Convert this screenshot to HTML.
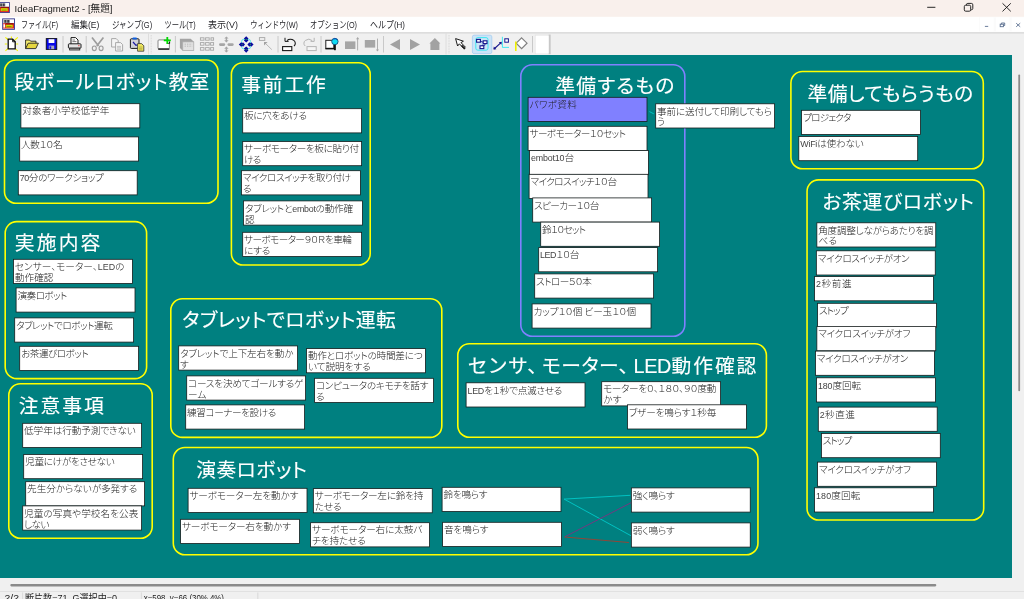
<!DOCTYPE html>
<html lang="ja">
<head>
<meta charset="utf-8">
<title>IdeaFragment2 - [無題]</title>
<style>
html,body{margin:0;padding:0;}
body{width:1024px;height:599px;overflow:hidden;background:#f0f0f0;position:relative;font-family:"Liberation Sans","Noto Sans CJK JP",sans-serif;}
#canvas{position:absolute;left:0;top:55px;display:block;will-change:transform;}
#chrome,#bars{will-change:transform;}
.gt{font-family:"Liberation Sans","Noto Sans CJK JP",sans-serif;font-size:19.8px;fill:#ffffff;font-weight:400;font-feature-settings:'palt';stroke:#ffffff;stroke-width:0.14px;}
.ct{font-family:"Liberation Sans","Noto Sans CJK JP",sans-serif;font-size:9.65px;fill:#1c1c1c;font-weight:300;font-feature-settings:'palt';}
#titlebar{position:absolute;left:0;top:0;width:1024px;height:17px;background:#f9f0ec;}
#menubar{position:absolute;left:0;top:17px;width:1024px;height:15px;background:#ffffff;}
#toolbar{position:absolute;left:0;top:32px;width:1024px;height:23px;background:#f0f0f0;}
#vscroll{position:absolute;left:1012px;top:55px;width:12px;height:523px;background:#f0f0f0;}
#hscroll{position:absolute;left:0;top:578px;width:1024px;height:13px;background:#f0f0f0;}
#status{position:absolute;left:0;top:591px;width:1024px;height:8px;background:#f0f0f0;overflow:hidden;}
svg{display:block;}
svg text{white-space:pre;}
.lat{fill:#444;font-size:8.9px;}
</style>
</head>
<body>
<div id="titlebar"></div>
<div id="menubar"></div>
<div id="toolbar"></div>
<svg id="chrome" width="1024" height="55" viewBox="0 0 1024 55" style="position:absolute;left:0;top:0">
<defs>
<style>
.tt{font-family:"Liberation Sans","Noto Sans CJK JP",sans-serif;font-size:9.8px;fill:#1a1a1a;}
.mt{font-family:"Liberation Sans","Noto Sans CJK JP",sans-serif;font-size:9.6px;fill:#1f1f24;}
</style>
</defs>
<!-- title bar -->
<rect x="0" y="0" width="1024" height="16.8" fill="#f9f0ec"/>
<g id="appicon">
<rect x="-3" y="2.1" width="12.8" height="10.9" fill="#34348c"/>
<rect x="-3" y="2.9" width="12" height="9.2" fill="#ffffff"/>
<rect x="-1" y="3.3" width="6.3" height="3.2" fill="#8c8c90"/>
<rect x="0.4" y="3.6" width="1.4" height="2.6" fill="#3c3c44"/><rect x="3" y="3.6" width="1.6" height="2.6" fill="#3c3c44"/>
<rect x="-3" y="6.9" width="12" height="5.2" fill="#e02424"/>
<rect x="0.6" y="6.8" width="8.4" height="1.3" fill="#8c1414"/>
<rect x="0.8" y="8.2" width="6.9" height="2.9" fill="#d4dc00"/>
<rect x="1.6" y="9.6" width="5" height="1" fill="#8c9400"/>
</g>
<text class="tt" x="14.6" y="11.5" textLength="97.8" lengthAdjust="spacingAndGlyphs">IdeaFragment2 - [無題]</text>
<g stroke="#1c1c1c" stroke-width="0.95" fill="none">
<line x1="927.2" y1="7.3" x2="935.4" y2="7.3"/>
<rect x="964.3" y="5.2" width="6.4" height="6" rx="1.4"/>
<path d="M966.4 5.2 v-0.4 a1.4 1.4 0 0 1 1.4 -1.4 h3.6 a1.4 1.4 0 0 1 1.4 1.4 v3.6 a1.4 1.4 0 0 1 -1.4 1.4 h-0.5"/>
<path d="M1002.5 3.3 l8.3 8.1 M1010.8 3.3 l-8.3 8.1"/>
</g>
<!-- menu bar -->
<rect x="0" y="16.8" width="1024" height="15.2" fill="#ffffff"/>

<g id="docicon">
<rect x="2.2" y="18.4" width="12.7" height="11.4" fill="#34348c"/>
<rect x="3.1" y="19.3" width="10.9" height="9.5" fill="#ffffff"/>
<rect x="3.5" y="19.7" width="6.4" height="3.2" fill="#8c8c90"/>
<rect x="4.6" y="20" width="1.4" height="2.6" fill="#3c3c44"/><rect x="7.4" y="20" width="1.6" height="2.6" fill="#3c3c44"/>
<rect x="3.1" y="23.2" width="10.9" height="5.3" fill="#e02424"/>
<rect x="3.4" y="24.2" width="1.6" height="3.4" fill="#ffffff"/>
<rect x="5.4" y="23.1" width="8.2" height="1.4" fill="#8c1414"/>
<rect x="5.7" y="24.8" width="7" height="2.7" fill="#d4dc00"/>
<rect x="6.6" y="26" width="5" height="1" fill="#8c9400"/>
</g>
<text class="mt" x="20.9" y="28.4" textLength="37.2" lengthAdjust="spacingAndGlyphs">ファイル(F)</text>
<text class="mt" x="71" y="28.4" textLength="28.4" lengthAdjust="spacingAndGlyphs">編集(E)</text>
<text class="mt" x="112" y="28.4" textLength="40.2" lengthAdjust="spacingAndGlyphs">ジャンプ(G)</text>
<text class="mt" x="164.4" y="28.4" textLength="31.2" lengthAdjust="spacingAndGlyphs">ツール(T)</text>
<text class="mt" x="208" y="28.4" textLength="30" lengthAdjust="spacingAndGlyphs">表示(V)</text>
<text class="mt" x="250.2" y="28.4" textLength="47.8" lengthAdjust="spacingAndGlyphs">ウィンドウ(W)</text>
<text class="mt" x="310" y="28.4" textLength="47" lengthAdjust="spacingAndGlyphs">オプション(O)</text>
<text class="mt" x="370" y="28.4" textLength="35" lengthAdjust="spacingAndGlyphs">ヘルプ(H)</text>
<!-- MDI buttons -->
<g>
<rect x="979" y="17.4" width="45" height="14" fill="#fbfbfb"/>
<rect x="980" y="17.4" width="13.6" height="14" fill="#ffffff"/>
<rect x="995.8" y="17.4" width="13.7" height="14" fill="#ffffff"/>
<rect x="1011.6" y="17.4" width="12.4" height="14" fill="#ffffff"/>
<g stroke="#5b6f90" stroke-width="0.9" fill="none">
<line x1="984.9" y1="26.4" x2="988.2" y2="26.4"/>
<rect x="1000.2" y="24.2" width="3.2" height="2.5"/>
<path d="M1001.4 24.2 v-1.2 h3.3 v2.5 h-1.3"/>
<path d="M1016.2 23.2 l4 3.6 M1020.2 23.2 l-4 3.6"/>
</g>
</g>
<!-- toolbar -->
<rect x="0" y="32" width="1024" height="23" fill="#f0f0f0"/>
<rect x="0" y="32" width="1024" height="1.7" fill="#dddddd"/>
<g id="tb">
<!-- separators -->
<g stroke="#c4c4c4" stroke-width="0.9">
<line x1="63" y1="36" x2="63" y2="52.5"/>
<line x1="86.2" y1="36" x2="86.2" y2="52.5"/>
<line x1="148.5" y1="33.5" x2="148.5" y2="54.5" stroke="#dadada"/>
<line x1="175.4" y1="36" x2="175.4" y2="52.5"/>
<line x1="278" y1="36" x2="278" y2="52.5"/>
<line x1="321" y1="36" x2="321" y2="52.5"/>
<line x1="383.5" y1="36" x2="383.5" y2="52.5"/>
<line x1="446" y1="33.5" x2="446" y2="54.5" stroke="#dadada"/>
<line x1="532.5" y1="36" x2="532.5" y2="52.5"/>
<line x1="151.2" y1="35" x2="151.2" y2="54" stroke="#cfcfcf" stroke-dasharray="0.8 0.8"/>
<line x1="449" y1="35" x2="449" y2="54" stroke="#cfcfcf" stroke-dasharray="0.8 0.8"/>
</g>
<!-- 1 new -->
<g>
<path d="M5.4 37.4 l3 2.6 M17.8 37.4 l-3 2.6 M5.4 50.8 l3 -2.6 M17.8 50.8 l-3 -2.6 M11.4 36.4 v2 M4.8 44 h2.4 M18.2 44 h-2" stroke="#f4f400" stroke-width="1.1" fill="none"/>
<path d="M8.2 39.2 h4.4 l2.6 2.6 v7 h-7 z" fill="#ffffff" stroke="#0c0c0c" stroke-width="1.3"/>
<path d="M12.6 39.2 v2.6 h2.6" fill="none" stroke="#0c0c0c" stroke-width="0.9"/>
</g>
<!-- 2 open -->
<g>
<path d="M25.6 48.6 v-8.6 h4 l1 1.2 h5.4 v2" fill="#f4ec70" stroke="#222" stroke-width="0.9"/>
<path d="M25.6 48.6 l2.6 -5.4 h10.2 l-2.6 5.4 z" fill="#e6d640" stroke="#222" stroke-width="0.9"/>
</g>
<!-- 3 save -->
<g>
<rect x="46.3" y="38.6" width="10.4" height="10.8" fill="#0808e8" stroke="#101020" stroke-width="1"/>
<rect x="48.6" y="39.2" width="5.8" height="3.8" fill="#ffffff"/>
<rect x="48.8" y="45.6" width="5.4" height="3.6" fill="#a8a8c0"/>
<rect x="49.6" y="46.4" width="1.6" height="2.4" fill="#0808e8"/>
</g>
<!-- 4 print -->
<g>
<path d="M71 44 v-6.4 h4.6 l2.4 2.4 v4" fill="#ffffff" stroke="#1c1c1c" stroke-width="1"/>
<path d="M72.4 40 h2.6 M72.4 41.6 h4" stroke="#444" stroke-width="0.7"/>
<rect x="68.4" y="43.8" width="12.6" height="4.4" rx="0.8" fill="#e4e4e4" stroke="#1c1c1c" stroke-width="1"/>
<rect x="69.6" y="48.2" width="10.2" height="1.8" fill="#bdbdbd" stroke="#1c1c1c" stroke-width="0.8"/>
<rect x="78.2" y="45.2" width="1.3" height="1" fill="#e03030"/>
</g>
<!-- 5 cut gray -->
<g stroke="#9c9c9c" fill="none">
<path d="M92 37.4 l6.6 8.6 M103.4 37.4 l-6.6 8.6" stroke-width="1.7"/>
<ellipse cx="94.3" cy="48.3" rx="2" ry="2.3" stroke-width="1.1"/>
<ellipse cx="101.1" cy="48.3" rx="2" ry="2.3" stroke-width="1.1"/>
</g>
<!-- 6 copy gray -->
<g stroke="#a0a0a0" stroke-width="0.9" fill="#f4f4f4">
<path d="M111.6 38.6 h4.6 l2 2 v6.4 h-6.6 z"/>
<path d="M115.6 42.6 h5 l2 2 v6.4 h-7 z"/>
<path d="M117 46.4 h4 M117 47.8 h4 M117 49.2 h4" stroke-width="0.6"/>
</g>
<!-- 7 paste -->
<g>
<rect x="130.4" y="38.8" width="8.6" height="9.6" rx="0.8" fill="#d0d0d8" stroke="#181818" stroke-width="1"/>
<rect x="132.4" y="37.4" width="4.6" height="2.2" rx="1" fill="#1060e0"/>
<path d="M133 42 l3 3.4 l1.6 -0.6" fill="none" stroke="#1818a0" stroke-width="1.2"/>
<path d="M137.6 43.6 h4 l2.2 2.2 v5.4 h-6.2 z" fill="#f0e860" stroke="#333" stroke-width="0.8"/>
<path d="M139 47 h3.4 M139 48.4 h3.4 M139 49.8 h3.4" stroke="#8a8430" stroke-width="0.5"/>
</g>
<!-- 8 new card -->
<g>
<rect x="158" y="39.9" width="11.4" height="9" rx="1" fill="#ffffff" stroke="#7c7c7c" stroke-width="0.9"/>
<path d="M158.2 49.1 h11.2" stroke="#101010" stroke-width="1.3"/>
<path d="M168.2 43.4 h1.4 v-1.6" stroke="#101010" stroke-width="1" fill="none"/>
<path d="M167.3 36.9 v7 M163.8 40.4 h7" stroke="#00d800" stroke-width="1.8" fill="none"/>
</g>
<!-- 9 gray stack -->
<g>
<path d="M179.9 38.8 h10.8 l3.2 2.9 v9 h-11.2 l-2.8 -2.6 z" fill="#a4a4a4"/>
<rect x="182.8" y="41.9" width="11" height="8.7" fill="#e2e2e2" stroke="#b0b0b0" stroke-width="0.7"/>
<path d="M184.6 44.2 h7.6 M184.6 46.2 h7.6" stroke="#b4b4b4" stroke-width="0.9" stroke-dasharray="1.3 1.1"/>
</g>
<!-- 10 gray grid -->
<g fill="#f0f0f0" stroke="#a6a6a6" stroke-width="0.9">
<rect x="200.4" y="37.8" width="3.6" height="2.4"/><rect x="205.6" y="37.8" width="3.6" height="2.4"/><rect x="211" y="37.8" width="2.6" height="2.4"/>
<rect x="200.4" y="42.6" width="3.6" height="2.6"/><rect x="205.6" y="42.6" width="3.6" height="2.6"/><rect x="210.6" y="42.6" width="3" height="2.6"/>
<rect x="200.4" y="47.6" width="3.6" height="2.6"/><rect x="205.6" y="47.6" width="3.6" height="2.6"/><rect x="210.6" y="47.6" width="3" height="2.6"/>
</g>
<!-- 11 gray 4 arrows -->
<g fill="#a6a6a6">
<rect x="219" y="43.2" width="6.2" height="2.7" rx="1.3"/>
<rect x="227.5" y="43.2" width="6.2" height="2.7" rx="1.3"/>
<path d="M226.4 36.4 l2.2 2.2 h-1.5 v1.6 h1.5 l-2.2 2.2 l-2.2 -2.2 h1.5 v-1.6 h-1.5 z"/>
<path d="M226.4 46.6 l2.2 2.2 h-1.5 v1.6 h1.5 l-2.2 2.2 l-2.2 -2.2 h1.5 v-1.6 h-1.5 z"/>
</g>
<!-- 12 blue 4 arrows -->
<g>
<rect x="241.6" y="39.3" width="9" height="9.6" rx="2.2" fill="none" stroke="#48e4e8" stroke-width="0.9"/>
<g fill="#0808a0">
<path d="M246.2 36.2 l2.3 2.4 l-1 0.9 l1 0.9 l-2.3 2 l-2.3 -2 l1 -0.9 l-1 -0.9 z"/>
<path d="M246.2 52.7 l2.3 -2.4 l-1 -0.9 l1 -0.9 l-2.3 -2 l-2.3 2 l1 0.9 l-1 0.9 z"/>
<path d="M238.8 44.5 l2.4 -2.3 l0.9 1 l0.9 -1 l2 2.3 l-2 2.3 l-0.9 -1 l-0.9 1 z"/>
<path d="M253.6 44.5 l-2.4 -2.3 l-0.9 1 l-0.9 -1 l-2 2.3 l2 2.3 l0.9 -1 l0.9 1 z"/>
</g>
<g fill="#30a040">
<rect x="245.5" y="38.9" width="1.4" height="0.9"/><rect x="245.5" y="49.3" width="1.4" height="0.9"/>
<rect x="241.6" y="44" width="0.9" height="1.1"/><rect x="249.9" y="44" width="0.9" height="1.1"/>
</g>
</g>
<!-- 13 gray arrow -->
<g>
<rect x="259.4" y="37.6" width="5.4" height="2.8" fill="none" stroke="#a6a6a6" stroke-width="0.9"/>
<path d="M264 42 h3.6 l-3.6 3.6 z" fill="#a2a2a2"/>
<path d="M265.4 43.4 l6.4 6.2" stroke="#a8a8a8" stroke-width="0.8"/>
</g>
<!-- 14 undo -->
<g fill="none" stroke="#181818" stroke-width="1.1">
<rect x="282.6" y="46.6" width="9.2" height="4" fill="#fff"/>
<path d="M294 46 a4.4 3.6 0 1 0 -7 -5.4"/>
<path d="M285 37.8 v3.6 h3.6" stroke-width="1"/>
</g>
<!-- 15 redo gray -->
<g fill="none" stroke="#b4b4b4" stroke-width="1">
<rect x="307" y="46.6" width="9.2" height="4" fill="#f6f6f6"/>
<path d="M305.2 46 a4.4 3.6 0 1 1 7 -5.4"/>
<path d="M314.2 37.8 v3.6 h-3.6"/>
</g>
<!-- 16 balloon -->
<g>
<rect x="325.8" y="40.3" width="8" height="8" fill="#ffffff" stroke="#202020" stroke-width="1"/>
<path d="M325.4 48.7 h9" stroke="#101010" stroke-width="1.4"/>
<path d="M334.9 44 v6.2" stroke="#101010" stroke-width="1.9"/>
<circle cx="334.9" cy="41.5" r="3.2" fill="#10dcf4" stroke="#103c70" stroke-width="0.8"/>
<path d="M333.4 39.2 a3 3 0 0 1 3.6 0.4" stroke="#1040c0" stroke-width="0.9" fill="none"/>
</g>
<!-- 17/18 gray squares with arrows -->
<g fill="#a6a6a6" stroke="none">
<rect x="345" y="41.4" width="10.4" height="7.6"/>
<rect x="357.2" y="38.4" width="0.9" height="12" />
<path d="M357.65 37 l1.6 2.2 h-3.2 z"/>
<rect x="364.8" y="40" width="10.4" height="7.6"/>
<rect x="377" y="38.6" width="0.9" height="12"/>
<path d="M377.45 51.6 l1.6 -2.2 h-3.2 z"/>
</g>
<!-- 19-21 -->
<g fill="#a2a2a2">
<path d="M390 44.5 l10 -5.4 v10.8 z"/>
<path d="M420 44.5 l-10 -5.4 v10.8 z"/>
<path d="M429.4 43.6 l5.5 -5.6 l5.5 5.6 h-1 v6.4 h-9 v-6.4 z"/>
</g>
<!-- 22 cursor -->
<g>
<path d="M455.6 38.6 l2 7.4 l1.8 -2.2 l4.4 4.8 l1.6 -1.4 l-4.4 -4.6 l2.4 -1.4 z" fill="#ffffff" stroke="#1a1a1a" stroke-width="1" stroke-linejoin="round"/>
<path d="M461.6 45.4 l3.4 3.6" stroke="#1a1a1a" stroke-width="1.6"/>
</g>
<!-- 23 selected -->
<g>
<rect x="472.4" y="35.2" width="19.4" height="18.4" rx="1.6" fill="#cce4f7" stroke="#a4cdf0" stroke-width="0.8"/>
<rect x="475.8" y="37.6" width="12.2" height="12.6" rx="2" fill="none" stroke="#30e8f0" stroke-width="0.9"/>
<g fill="#ffffff" stroke="#14148c" stroke-width="1.1">
<rect x="476.6" y="39.4" width="3.8" height="2.8"/>
<rect x="483.2" y="40.8" width="3.8" height="2.8"/>
<rect x="480" y="45.8" width="3.8" height="2.8"/>
</g>
<path d="M480.4 41.6 h2 v1 M485 43.6 v1.6 h-3 v0.6" fill="none" stroke="#14148c" stroke-width="0.8"/>
</g>
<!-- 24 arrow+box -->
<g>
<path d="M502.4 36.8 v10.6 h6.6" fill="none" stroke="#30e8f0" stroke-width="0.9"/>
<rect x="504.8" y="38.8" width="3.6" height="3.4" fill="#fff" stroke="#14148c" stroke-width="1"/>
<path d="M494 49 l7 -6.4" stroke="#14148c" stroke-width="1.1"/>
<path d="M493.4 49.6 l0.4 -3 l2.6 2.6 z M501.8 41.8 l-0.4 3 l-2.6 -2.6 z" fill="#14148c"/>
</g>
<!-- 25 diamond -->
<g>
<path d="M521.6 37.8 l5.4 5.4 l-5.4 5.4 l-5.4 -5.4 z" fill="#ffffff" stroke="#808080" stroke-width="1.2"/>
<path d="M515.8 41.6 v9.4" stroke="#f0f000" stroke-width="1.6"/>
</g>
<!-- 26 white box -->
<rect x="534.8" y="34.6" width="15.8" height="19.6" fill="#e4e4e4"/>
<rect x="548.6" y="34.6" width="2" height="19.6" fill="#c8c8c8"/>
<rect x="535.6" y="35.6" width="13.1" height="17.9" fill="#ffffff"/>
</g>
</svg>

<svg id="canvas" width="1012" height="523" viewBox="0 55 1012 523">
<rect x="0" y="55" width="1012" height="523" fill="#008080"/>
<g class="group" id="g1">
<rect x="4.50" y="60.00" width="213.50" height="143.20" rx="11.5" ry="11.5" fill="none" stroke="#ffff00" stroke-width="1.6"/>
<text class="gt" x="14.20" y="89.10" textLength="195.10" lengthAdjust="spacing">段ボールロボット教室</text>
</g>
<g class="group" id="g2">
<rect x="231.40" y="62.80" width="138.80" height="202.20" rx="11.5" ry="11.5" fill="none" stroke="#ffff00" stroke-width="1.6"/>
<text class="gt" x="241.20" y="91.90" textLength="84.60" lengthAdjust="spacing">事前工作</text>
</g>
<g class="group" id="g3">
<rect x="5.20" y="221.60" width="141.40" height="157.00" rx="11.5" ry="11.5" fill="none" stroke="#ffff00" stroke-width="1.6"/>
<text class="gt" x="14.80" y="250.10" textLength="85.60" lengthAdjust="spacing">実施内容</text>
</g>
<g class="group" id="g4">
<rect x="8.80" y="383.80" width="143.40" height="154.40" rx="11.5" ry="11.5" fill="none" stroke="#ffff00" stroke-width="1.6"/>
<text class="gt" x="18.80" y="412.50" textLength="85.00" lengthAdjust="spacing">注意事項</text>
</g>
<g class="group" id="g5">
<rect x="170.80" y="298.80" width="271.00" height="138.60" rx="11.5" ry="11.5" fill="none" stroke="#ffff00" stroke-width="1.6"/>
<text class="gt" x="182.20" y="327.10" textLength="213.60" lengthAdjust="spacing">タブレットでロボット運転</text>
</g>
<g class="group" id="g6">
<rect x="457.80" y="343.80" width="308.60" height="93.40" rx="11.5" ry="11.5" fill="none" stroke="#ffff00" stroke-width="1.6"/>
<text class="gt" x="467.80" y="372.50" textLength="59.40" lengthAdjust="spacing">センサ</text>
<text class="gt" x="527.40" y="372.50">、</text>
<text class="gt" x="542.00" y="372.50" textLength="76.60" lengthAdjust="spacing">モーター</text>
<text class="gt" x="618.80" y="372.50">、</text>
<text class="gt" x="633.60" y="372.50" textLength="37.60" lengthAdjust="spacing">LED</text>
<text class="gt" x="671.60" y="372.50" textLength="84.80" lengthAdjust="spacing">動作確認</text>
</g>
<g class="group" id="gp">
<rect x="520.80" y="64.80" width="164.00" height="271.40" rx="11.5" ry="11.5" fill="none" stroke="#8080ff" stroke-width="1.6"/>
<text class="gt" x="555.20" y="92.50" textLength="119.20" lengthAdjust="spacing">準備するもの</text>
</g>
<g class="group" id="g7">
<rect x="790.90" y="71.50" width="192.40" height="97.30" rx="11.5" ry="11.5" fill="none" stroke="#ffff00" stroke-width="1.6"/>
<text class="gt" x="807.60" y="100.50" textLength="165.50" lengthAdjust="spacing">準備してもらうもの</text>
</g>
<g class="group" id="g8">
<rect x="807.05" y="179.90" width="176.65" height="340.05" rx="11.5" ry="11.5" fill="none" stroke="#ffff00" stroke-width="1.6"/>
<text class="gt" x="822.45" y="209.00" textLength="151.60" lengthAdjust="spacing">お茶運びロボット</text>
</g>
<g class="group" id="g9">
<rect x="173.30" y="447.55" width="584.65" height="107.15" rx="11.5" ry="11.5" fill="none" stroke="#ffff00" stroke-width="1.6"/>
<text class="gt" x="196.20" y="476.50" textLength="110.85" lengthAdjust="spacing">演奏ロボット</text>
</g>
<line x1="564.1" y1="499.1" x2="630.4" y2="495.3" stroke="#00c8c8" stroke-width="0.9"/>
<line x1="564.1" y1="499.1" x2="631.1" y2="535.8" stroke="#00c8c8" stroke-width="0.9"/>
<line x1="564.6" y1="536.9" x2="631.7" y2="502.4" stroke="#803080" stroke-width="0.9"/>
<line x1="564.6" y1="537.0" x2="628.9" y2="542.5" stroke="#a04030" stroke-width="0.9"/>
<line x1="649.4" y1="111.6" x2="653.8" y2="113.8" stroke="#00c8c8" stroke-width="0.9"/>
<g class="card">
<rect x="20.90" y="103.70" width="118.9" height="24.2" fill="#ffffff" stroke="#141c1c" stroke-width="0.8"/>
<text class="ct" x="22.30" y="114.40" textLength="87.10" lengthAdjust="spacing">対象者小学校低学年</text>
</g>
<g class="card">
<rect x="19.70" y="136.90" width="118.9" height="24.2" fill="#ffffff" stroke="#141c1c" stroke-width="0.8"/>
<text class="ct" x="21.10" y="147.60" textLength="41.50" lengthAdjust="spacing">人数１０名</text>
</g>
<g class="card">
<rect x="18.30" y="170.70" width="118.9" height="24.2" fill="#ffffff" stroke="#141c1c" stroke-width="0.8"/>
<text class="ct" x="19.70" y="181.40" textLength="84.10" lengthAdjust="spacing"><tspan class="lat">70</tspan>分のワークショップ</text>
</g>
<g class="card">
<rect x="242.70" y="108.70" width="118.9" height="24.2" fill="#ffffff" stroke="#141c1c" stroke-width="0.8"/>
<text class="ct" x="244.10" y="119.40" textLength="62.90" lengthAdjust="spacing">板に穴をあける</text>
</g>
<g class="card">
<rect x="242.70" y="141.50" width="118.9" height="24.2" fill="#ffffff" stroke="#141c1c" stroke-width="0.8"/>
<text class="ct" x="244.10" y="152.20" textLength="114.90" lengthAdjust="spacing">サーボモーターを板に貼り付</text>
<text class="ct" x="244.10" y="163.10" textLength="17.30" lengthAdjust="spacing">ける</text>
</g>
<g class="card">
<rect x="241.50" y="170.70" width="118.9" height="24.2" fill="#ffffff" stroke="#141c1c" stroke-width="0.8"/>
<text class="ct" x="242.90" y="181.40" textLength="108.10" lengthAdjust="spacing">マイクロスイッチを取り付け</text>
<text class="ct" x="242.90" y="192.30" textLength="8.37" lengthAdjust="spacing">る</text>
</g>
<g class="card">
<rect x="243.50" y="200.90" width="118.9" height="24.2" fill="#ffffff" stroke="#141c1c" stroke-width="0.8"/>
<text class="ct" x="244.90" y="211.60" textLength="108.10" lengthAdjust="spacing">タブレットと<tspan class="lat">embot</tspan>の動作確</text>
<text class="ct" x="244.90" y="222.50" textLength="9.05" lengthAdjust="spacing">認</text>
</g>
<g class="card">
<rect x="242.70" y="232.30" width="118.9" height="24.2" fill="#ffffff" stroke="#141c1c" stroke-width="0.8"/>
<text class="ct" x="244.10" y="243.00" textLength="107.70" lengthAdjust="spacing">サーボモーター９０Ｒを車輪</text>
<text class="ct" x="244.10" y="253.90" textLength="26.30" lengthAdjust="spacing">にする</text>
</g>
<g class="card">
<rect x="13.50" y="259.30" width="118.9" height="24.2" fill="#ffffff" stroke="#141c1c" stroke-width="0.8"/>
<text class="ct" x="14.90" y="270.00" textLength="109.50" lengthAdjust="spacing">センサー、モーター、<tspan class="lat">LED</tspan>の</text>
<text class="ct" x="14.90" y="280.90" textLength="38.50" lengthAdjust="spacing">動作確認</text>
</g>
<g class="card">
<rect x="16.10" y="287.90" width="118.9" height="24.2" fill="#ffffff" stroke="#141c1c" stroke-width="0.8"/>
<text class="ct" x="17.50" y="298.60" textLength="49.90" lengthAdjust="spacing">演奏ロボット</text>
</g>
<g class="card">
<rect x="14.70" y="317.90" width="118.9" height="24.2" fill="#ffffff" stroke="#141c1c" stroke-width="0.8"/>
<text class="ct" x="16.10" y="328.60" textLength="96.70" lengthAdjust="spacing">タブレットでロボット運転</text>
</g>
<g class="card">
<rect x="19.70" y="346.30" width="118.9" height="24.2" fill="#ffffff" stroke="#141c1c" stroke-width="0.8"/>
<text class="ct" x="21.10" y="357.00" textLength="67.70" lengthAdjust="spacing">お茶運びロボット</text>
</g>
<g class="card">
<rect x="22.70" y="423.30" width="118.9" height="24.2" fill="#ffffff" stroke="#141c1c" stroke-width="0.8"/>
<text class="ct" x="24.10" y="434.00" textLength="111.70" lengthAdjust="spacing">低学年は行動予測できない</text>
</g>
<g class="card">
<rect x="23.70" y="454.50" width="118.9" height="24.2" fill="#ffffff" stroke="#141c1c" stroke-width="0.8"/>
<text class="ct" x="25.10" y="465.20" textLength="89.70" lengthAdjust="spacing">児童にけがをさせない</text>
</g>
<g class="card">
<rect x="25.70" y="481.70" width="118.9" height="24.2" fill="#ffffff" stroke="#141c1c" stroke-width="0.8"/>
<text class="ct" x="27.10" y="492.40" textLength="110.30" lengthAdjust="spacing">先生分からないが多発する</text>
</g>
<g class="card">
<rect x="22.70" y="505.90" width="118.9" height="24.2" fill="#ffffff" stroke="#141c1c" stroke-width="0.8"/>
<text class="ct" x="24.10" y="516.60" textLength="114.30" lengthAdjust="spacing">児童の写真や学校名を公表</text>
<text class="ct" x="24.10" y="527.50" textLength="25.30" lengthAdjust="spacing">しない</text>
</g>
<g class="card">
<rect x="178.70" y="345.90" width="118.9" height="24.2" fill="#ffffff" stroke="#141c1c" stroke-width="0.8"/>
<text class="ct" x="180.10" y="356.60" textLength="113.30" lengthAdjust="spacing">タブレットで上下左右を動か</text>
<text class="ct" x="180.10" y="367.50" textLength="8.37" lengthAdjust="spacing">す</text>
</g>
<g class="card">
<rect x="186.70" y="375.90" width="118.9" height="24.2" fill="#ffffff" stroke="#141c1c" stroke-width="0.8"/>
<text class="ct" x="188.10" y="386.60" textLength="115.30" lengthAdjust="spacing">コースを決めてゴールするゲ</text>
<text class="ct" x="188.10" y="397.50" textLength="18.30" lengthAdjust="spacing">ーム</text>
</g>
<g class="card">
<rect x="185.70" y="404.90" width="118.9" height="24.2" fill="#ffffff" stroke="#141c1c" stroke-width="0.8"/>
<text class="ct" x="187.10" y="415.60" textLength="89.30" lengthAdjust="spacing">練習コーナーを設ける</text>
</g>
<g class="card">
<rect x="306.50" y="348.60" width="118.9" height="24.2" fill="#ffffff" stroke="#141c1c" stroke-width="0.8"/>
<text class="ct" x="307.90" y="359.30" textLength="114.90" lengthAdjust="spacing">動作とロボットの時間差につ</text>
<text class="ct" x="307.90" y="370.20" textLength="62.90" lengthAdjust="spacing">いて説明をする</text>
</g>
<g class="card">
<rect x="314.60" y="378.30" width="118.9" height="24.2" fill="#ffffff" stroke="#141c1c" stroke-width="0.8"/>
<text class="ct" x="316.00" y="389.00" textLength="112.40" lengthAdjust="spacing">コンピュータのキモチを話す</text>
<text class="ct" x="316.00" y="399.90" textLength="8.37" lengthAdjust="spacing">る</text>
</g>
<g class="card">
<rect x="466.10" y="382.80" width="118.9" height="24.2" fill="#ffffff" stroke="#141c1c" stroke-width="0.8"/>
<text class="ct" x="467.50" y="393.50" textLength="94.90" lengthAdjust="spacing"><tspan class="lat">LED</tspan>を１秒で点滅させる</text>
</g>
<g class="card">
<rect x="601.70" y="381.70" width="118.9" height="24.2" fill="#ffffff" stroke="#141c1c" stroke-width="0.8"/>
<text class="ct" x="603.10" y="392.40" textLength="113.30" lengthAdjust="spacing">モーターを０、１８０、９０度動</text>
<text class="ct" x="603.10" y="403.30" textLength="18.30" lengthAdjust="spacing">かす</text>
</g>
<g class="card">
<rect x="627.50" y="404.80" width="118.9" height="24.2" fill="#ffffff" stroke="#141c1c" stroke-width="0.8"/>
<text class="ct" x="628.90" y="415.50" textLength="87.50" lengthAdjust="spacing">ブザーを鳴らす１秒毎</text>
</g>
<g class="card">
<rect x="528.10" y="97.30" width="118.9" height="24.2" fill="#8080ff" stroke="#141c1c" stroke-width="0.8"/>
<text class="ct" x="529.50" y="108.00" textLength="47.40" lengthAdjust="spacing">パワポ資料</text>
</g>
<g class="card">
<rect x="655.70" y="103.80" width="118.9" height="24.2" fill="#ffffff" stroke="#141c1c" stroke-width="0.8"/>
<text class="ct" x="657.10" y="114.50" textLength="114.90" lengthAdjust="spacing">事前に送付して印刷してもら</text>
<text class="ct" x="657.10" y="125.40" textLength="8.37" lengthAdjust="spacing">う</text>
</g>
<g class="card">
<rect x="528.10" y="126.30" width="118.9" height="24.2" fill="#ffffff" stroke="#141c1c" stroke-width="0.8"/>
<text class="ct" x="529.50" y="137.00" textLength="96.50" lengthAdjust="spacing">サーボモーター１０セット</text>
</g>
<g class="card">
<rect x="529.50" y="150.50" width="118.9" height="24.2" fill="#ffffff" stroke="#141c1c" stroke-width="0.8"/>
<text class="ct" x="530.90" y="161.20" textLength="43.10" lengthAdjust="spacing"><tspan class="lat">embot10</tspan>台</text>
</g>
<g class="card">
<rect x="529.10" y="174.30" width="118.9" height="24.2" fill="#ffffff" stroke="#141c1c" stroke-width="0.8"/>
<text class="ct" x="530.50" y="185.00" textLength="86.50" lengthAdjust="spacing">マイクロスイッチ１０台</text>
</g>
<g class="card">
<rect x="532.70" y="197.90" width="118.9" height="24.2" fill="#ffffff" stroke="#141c1c" stroke-width="0.8"/>
<text class="ct" x="534.10" y="208.60" textLength="65.30" lengthAdjust="spacing">スピーカー１０台</text>
</g>
<g class="card">
<rect x="540.70" y="222.10" width="118.9" height="24.2" fill="#ffffff" stroke="#141c1c" stroke-width="0.8"/>
<text class="ct" x="542.10" y="232.80" textLength="43.90" lengthAdjust="spacing">鈴１０セット</text>
</g>
<g class="card">
<rect x="538.70" y="247.60" width="118.9" height="24.2" fill="#ffffff" stroke="#141c1c" stroke-width="0.8"/>
<text class="ct" x="540.10" y="258.30" textLength="39.30" lengthAdjust="spacing"><tspan class="lat">LED</tspan>１０台</text>
</g>
<g class="card">
<rect x="534.70" y="273.90" width="118.9" height="24.2" fill="#ffffff" stroke="#141c1c" stroke-width="0.8"/>
<text class="ct" x="536.10" y="284.60" textLength="55.70" lengthAdjust="spacing">ストロー５０本</text>
</g>
<g class="card">
<rect x="532.10" y="303.90" width="118.9" height="24.2" fill="#ffffff" stroke="#141c1c" stroke-width="0.8"/>
<text class="ct" x="533.50" y="314.60" textLength="102.50" lengthAdjust="spacing">カップ１０個 ビー玉１０個</text>
</g>
<g class="card">
<rect x="801.60" y="110.30" width="118.9" height="24.2" fill="#ffffff" stroke="#141c1c" stroke-width="0.8"/>
<text class="ct" x="803.00" y="121.00" textLength="48.30" lengthAdjust="spacing">プロジェクタ</text>
</g>
<g class="card">
<rect x="798.80" y="136.50" width="118.9" height="24.2" fill="#ffffff" stroke="#141c1c" stroke-width="0.8"/>
<text class="ct" x="800.20" y="147.20" textLength="63.60" lengthAdjust="spacing"><tspan class="lat">WiFi</tspan>は使わない</text>
</g>
<g class="card">
<rect x="816.85" y="222.80" width="118.9" height="24.2" fill="#ffffff" stroke="#141c1c" stroke-width="0.8"/>
<text class="ct" x="818.25" y="233.50" textLength="115.40" lengthAdjust="spacing">角度調整しながらあたりを調</text>
<text class="ct" x="818.25" y="244.40" textLength="18.90" lengthAdjust="spacing">べる</text>
</g>
<g class="card">
<rect x="816.35" y="250.80" width="118.9" height="24.2" fill="#ffffff" stroke="#141c1c" stroke-width="0.8"/>
<text class="ct" x="817.75" y="261.50" textLength="91.90" lengthAdjust="spacing">マイクロスイッチがオン</text>
</g>
<g class="card">
<rect x="814.60" y="276.60" width="118.9" height="24.2" fill="#ffffff" stroke="#141c1c" stroke-width="0.8"/>
<text class="ct" x="816.00" y="287.30" textLength="35.60" lengthAdjust="spacing"><tspan class="lat">2</tspan>秒前進</text>
</g>
<g class="card">
<rect x="817.60" y="303.30" width="118.9" height="24.2" fill="#ffffff" stroke="#141c1c" stroke-width="0.8"/>
<text class="ct" x="819.00" y="314.00" textLength="29.65" lengthAdjust="spacing">ストップ</text>
</g>
<g class="card">
<rect x="816.85" y="326.60" width="118.9" height="24.2" fill="#ffffff" stroke="#141c1c" stroke-width="0.8"/>
<text class="ct" x="818.25" y="337.30" textLength="92.15" lengthAdjust="spacing">マイクロスイッチがオフ</text>
</g>
<g class="card">
<rect x="815.50" y="351.10" width="118.9" height="24.2" fill="#ffffff" stroke="#141c1c" stroke-width="0.8"/>
<text class="ct" x="816.90" y="361.80" textLength="91.50" lengthAdjust="spacing">マイクロスイッチがオン</text>
</g>
<g class="card">
<rect x="816.50" y="377.80" width="118.9" height="24.2" fill="#ffffff" stroke="#141c1c" stroke-width="0.8"/>
<text class="ct" x="817.90" y="388.50" textLength="43.25" lengthAdjust="spacing"><tspan class="lat">180</tspan>度回転</text>
</g>
<g class="card">
<rect x="818.30" y="407.10" width="118.9" height="24.2" fill="#ffffff" stroke="#141c1c" stroke-width="0.8"/>
<text class="ct" x="819.70" y="417.80" textLength="35.20" lengthAdjust="spacing"><tspan class="lat">2</tspan>秒直進</text>
</g>
<g class="card">
<rect x="821.40" y="433.50" width="118.9" height="24.2" fill="#ffffff" stroke="#141c1c" stroke-width="0.8"/>
<text class="ct" x="822.80" y="444.20" textLength="29.35" lengthAdjust="spacing">ストップ</text>
</g>
<g class="card">
<rect x="817.60" y="462.10" width="118.9" height="24.2" fill="#ffffff" stroke="#141c1c" stroke-width="0.8"/>
<text class="ct" x="819.00" y="472.80" textLength="91.90" lengthAdjust="spacing">マイクロスイッチがオフ</text>
</g>
<g class="card">
<rect x="814.60" y="487.80" width="118.9" height="24.2" fill="#ffffff" stroke="#141c1c" stroke-width="0.8"/>
<text class="ct" x="816.00" y="498.50" textLength="44.40" lengthAdjust="spacing"><tspan class="lat">180</tspan>度回転</text>
</g>
<g class="card">
<rect x="188.10" y="488.30" width="118.9" height="24.2" fill="#ffffff" stroke="#141c1c" stroke-width="0.8"/>
<text class="ct" x="189.50" y="499.00" textLength="108.90" lengthAdjust="spacing">サーボモーター左を動かす</text>
</g>
<g class="card">
<rect x="180.60" y="519.30" width="118.9" height="24.2" fill="#ffffff" stroke="#141c1c" stroke-width="0.8"/>
<text class="ct" x="182.00" y="530.00" textLength="108.90" lengthAdjust="spacing">サーボモーター右を動かす</text>
</g>
<g class="card">
<rect x="313.35" y="488.60" width="118.9" height="24.2" fill="#ffffff" stroke="#141c1c" stroke-width="0.8"/>
<text class="ct" x="314.75" y="499.30" textLength="108.65" lengthAdjust="spacing">サーボモーター左に鈴を持</text>
<text class="ct" x="314.75" y="510.20" textLength="26.90" lengthAdjust="spacing">たせる</text>
</g>
<g class="card">
<rect x="310.60" y="522.70" width="118.9" height="24.2" fill="#ffffff" stroke="#141c1c" stroke-width="0.8"/>
<text class="ct" x="312.00" y="533.40" textLength="110.40" lengthAdjust="spacing">サーボモーター右に太鼓バ</text>
<text class="ct" x="312.00" y="544.30" textLength="53.90" lengthAdjust="spacing">チを持たせる</text>
</g>
<g class="card">
<rect x="442.10" y="487.30" width="118.9" height="24.2" fill="#ffffff" stroke="#141c1c" stroke-width="0.8"/>
<text class="ct" x="443.50" y="498.00" textLength="43.90" lengthAdjust="spacing">鈴を鳴らす</text>
</g>
<g class="card">
<rect x="442.60" y="522.30" width="118.9" height="24.2" fill="#ffffff" stroke="#141c1c" stroke-width="0.8"/>
<text class="ct" x="444.00" y="533.00" textLength="44.40" lengthAdjust="spacing">音を鳴らす</text>
</g>
<g class="card">
<rect x="631.35" y="487.90" width="118.9" height="24.2" fill="#ffffff" stroke="#141c1c" stroke-width="0.8"/>
<text class="ct" x="632.75" y="498.60" textLength="41.90" lengthAdjust="spacing">強く鳴らす</text>
</g>
<g class="card">
<rect x="631.35" y="522.90" width="118.9" height="24.2" fill="#ffffff" stroke="#141c1c" stroke-width="0.8"/>
<text class="ct" x="632.75" y="533.60" textLength="41.90" lengthAdjust="spacing">弱く鳴らす</text>
</g>
</svg>
<div id="vscroll"></div>
<div id="hscroll"></div>
<div id="status"></div>
<svg id="bars" width="1024" height="599" viewBox="0 0 1024 599" style="position:absolute;left:0;top:0;pointer-events:none">
<rect x="1018.3" y="74.6" width="1.8" height="316.6" rx="0.9" fill="#8a8a8a"/>
<rect x="10.3" y="584.1" width="926" height="2.3" rx="1.1" fill="#8a8a8a"/>
<rect x="0" y="591" width="1024" height="0.8" fill="#dedede"/>
<g stroke="#d4d4d4" stroke-width="0.8">
<line x1="22.6" y1="592.5" x2="22.6" y2="599"/>
<line x1="141.4" y1="592.5" x2="141.4" y2="599"/>
<line x1="257.8" y1="592.5" x2="257.8" y2="599"/>
</g>
<g style='font-family:"Liberation Sans","Noto Sans CJK JP",sans-serif;font-size:9.6px;fill:#1c1c1c'>
<text x="4.4" y="601.4" textLength="14.6" lengthAdjust="spacingAndGlyphs">2/2</text>
<text x="25" y="601.4" textLength="92" lengthAdjust="spacingAndGlyphs">断片数=71  G選択中=0</text>
<text x="143.8" y="601.4" textLength="80.2" lengthAdjust="spacingAndGlyphs">x=598  y=66 (30%,4%)</text>
</g>
</svg>

</body>
</html>
